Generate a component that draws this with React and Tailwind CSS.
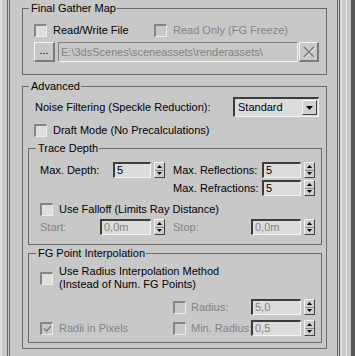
import React from 'react';

// 3ds Max style rollout: Final Gather Map + Advanced settings

function GroupBox({ title, inner, className = '', children }) {
  return (
    <fieldset className={`border border-[#6a6a6a] ${className}`}>
      <legend className={`${inner ? 'ml-[7px]' : 'ml-[6px]'} pl-[2px] pr-[1px] leading-[17px]`}>{title}</legend>
      {children}
    </fieldset>
  );
}

function Check({ checked, disabled }) {
  return (
    <div
      className={`w-[13px] h-[13px] shrink-0 flex items-center justify-center border-t-2 border-l-2 border-t-[#858585] border-l-[#858585] border-b border-r border-b-[#ececec] border-r-[#ececec] ${
        disabled ? 'bg-[#c8c8c8]' : 'bg-[#dedede]'
      }`}
    >
      {checked && (
        <svg width="9" height="8" viewBox="0 0 9 8">
          <path d="M1 3.5L3.5 6L8 1" fill="none" stroke={disabled ? '#808080' : '#000'} strokeWidth="1.6" />
        </svg>
      )}
    </div>
  );
}

function Field({ w, value, disabled }) {
  return (
    <div
      className={`${w} h-[16px] shrink-0 flex items-center pl-[2px] leading-none border-t-2 border-l-2 border-t-[#3c3c3c] border-l-[#3c3c3c] border-b border-r border-b-[#f4f4f4] border-r-[#f4f4f4] bg-[#dcdcdc] ${
        disabled ? 'text-[#838383]' : 'text-black'
      }`}
    >
      {value}
    </div>
  );
}

function Spinner() {
  return (
    <div className="w-[11px] h-[16px] ml-[3px] shrink-0 flex flex-col border-t border-l border-t-[#f4f4f4] border-l-[#f4f4f4] border-b border-r border-b-[#404040] border-r-[#404040] bg-[#cfcfcf]">
      <div className="flex-1 flex items-center justify-center border-b border-b-[#8a8a8a]">
        <svg width="5" height="3" viewBox="0 0 5 3"><path d="M2.5 0L5 3H0z" fill="#000" /></svg>
      </div>
      <div className="flex-1 flex items-center justify-center">
        <svg width="5" height="3" viewBox="0 0 5 3"><path d="M0 0h5L2.5 3z" fill="#000" /></svg>
      </div>
    </div>
  );
}

function Label({ w, disabled, children }) {
  return (
    <span className={`${w} shrink-0 whitespace-nowrap ${disabled ? 'text-[#838383]' : 'text-black'}`}>{children}</span>
  );
}

export default function App() {
  return (
    <div className="w-[355px] h-[356px] overflow-hidden flex bg-[#c8c8c8] text-[11px] text-black font-['Liberation_Sans',Arial,sans-serif]">
      {/* left edge */}
      <div className="w-[2px] shrink-0 bg-[#e2ded8]" />
      <div className="w-[5px] shrink-0" />

      {/* rollout */}
      <div className="w-[333px] shrink-0 flex flex-col border-x-[3px] border-double border-x-[#686868] pl-[12px] pr-[10px]">
        <GroupBox title="Final Gather Map">
          <div className="flex flex-col pt-[7px] pb-[12px] pl-[11px] pr-[6px]">
            <div className="h-[13px] flex items-center">
              <div className="w-[120px] flex items-center gap-[6px]">
                <Check />
                <Label>Read/Write File</Label>
              </div>
              <div className="flex items-center gap-[6px]">
                <Check disabled />
                <Label disabled>Read Only (FG Freeze)</Label>
              </div>
            </div>
            <div className="mt-[5px] h-[20px] flex items-center">
              <div className="w-[21px] h-[20px] flex items-end justify-center pb-[4px] border-t border-l border-t-[#f4f4f4] border-l-[#f4f4f4] border-b-2 border-r-2 border-b-[#7a7a7a] border-r-[#7a7a7a] leading-none">
                ...
              </div>
              <div className="ml-[3px] w-[240px] h-[20px] flex items-center pl-[2px] border-t border-l border-t-[#808080] border-l-[#808080] border-b border-r border-b-[#f4f4f4] border-r-[#f4f4f4] text-[#838383] whitespace-nowrap overflow-hidden">
                E:\3dsScenes\sceneassets\renderassets\
              </div>
              <div className="ml-[1px] w-[20px] h-[20px] flex items-center justify-center border-t border-l border-t-[#f4f4f4] border-l-[#f4f4f4] border-b-2 border-r-2 border-b-[#7a7a7a] border-r-[#7a7a7a]">
                <svg width="12" height="12" viewBox="0 0 12 12">
                  <path d="M1 1L11 11M11 1L1 11" stroke="#f4f4f4" strokeWidth="1.6" transform="translate(0.8 0.8)" />
                  <path d="M1 1L11 11M11 1L1 11" stroke="#7c7c7c" strokeWidth="1.6" />
                </svg>
              </div>
            </div>
          </div>
        </GroupBox>

        <GroupBox title="Advanced" className="mt-[3px]">
          <div className="flex flex-col pt-[2px] pb-[5px] pl-[5px] pr-[4px]">
            <div className="h-[20px] flex items-center justify-between pl-[7px] pr-[3px]">
              <Label>Noise Filtering (Speckle Reduction):</Label>
              <div className="w-[86px] h-[20px] flex items-center justify-between pl-[3px] pr-[1px] border-t-2 border-l-2 border-t-[#3c3c3c] border-l-[#3c3c3c] border-b border-r border-b-[#f4f4f4] border-r-[#f4f4f4] bg-[#dcdcdc]">
                <span>Standard</span>
                <div className="w-[15px] h-[15px] flex items-center justify-center border-t border-l border-t-[#f4f4f4] border-l-[#f4f4f4] border-b border-r border-b-[#404040] border-r-[#404040] bg-[#d2d2d2]">
                  <svg width="7" height="4" viewBox="0 0 7 4"><path d="M0 0h7L3.5 4z" fill="#000" /></svg>
                </div>
              </div>
            </div>

            <div className="mt-[7px] h-[13px] flex items-center gap-[6px] pl-[6px]">
              <Check />
              <Label>Draft Mode (No Precalculations)</Label>
            </div>

            <GroupBox title="Trace Depth" inner className="mt-[3px]">
              <div className="flex flex-col pt-[5px] pb-[9px] pl-[11px] pr-[6px]">
                <div className="h-[16px] flex items-center">
                  <div className="w-[133px] flex items-center">
                    <Label w="w-[73px]">Max. Depth:</Label>
                    <Field w="w-[38px]" value="5" />
                    <Spinner />
                  </div>
                  <div className="flex items-center">
                    <Label w="w-[89px]">Max. Reflections:</Label>
                    <Field w="w-[39px]" value="5" />
                    <Spinner />
                  </div>
                </div>
                <div className="mt-[2px] h-[16px] flex items-center">
                  <div className="w-[133px]" />
                  <div className="flex items-center">
                    <Label w="w-[89px]">Max. Refractions:</Label>
                    <Field w="w-[39px]" value="5" />
                    <Spinner />
                  </div>
                </div>
                <div className="mt-[7px] h-[13px] flex items-center gap-[6px]">
                  <Check />
                  <Label>Use Falloff (Limits Ray Distance)</Label>
                </div>
                <div className="mt-[3px] h-[16px] flex items-center">
                  <div className="w-[133px] flex items-center">
                    <Label w="w-[60px]" disabled>Start:</Label>
                    <Field w="w-[51px]" value="0,0m" disabled />
                    <Spinner />
                  </div>
                  <div className="flex items-center">
                    <Label w="w-[78px]" disabled>Stop:</Label>
                    <Field w="w-[50px]" value="0,0m" disabled />
                    <Spinner />
                  </div>
                </div>
              </div>
            </GroupBox>

            <GroupBox title="FG Point Interpolation" inner>
              <div className="flex flex-col pt-[3px] pb-[6px] pl-[11px] pr-[6px]">
                <div className="flex items-center gap-[6px]">
                  <Check />
                  <div className="flex flex-col leading-[13px]">
                    <span>Use Radius Interpolation Method</span>
                    <span>(Instead of Num. FG Points)</span>
                  </div>
                </div>
                <div className="mt-[8px] h-[16px] flex items-center">
                  <div className="w-[133px]" />
                  <div className="flex items-center">
                    <Check disabled />
                    <span className="w-[5px]" />
                    <Label w="w-[60px]" disabled>Radius:</Label>
                    <Field w="w-[50px]" value="5,0" disabled />
                    <Spinner />
                  </div>
                </div>
                <div className="mt-[5px] h-[16px] flex items-center">
                  <div className="w-[133px] flex items-center gap-[6px]">
                    <Check checked disabled />
                    <Label disabled>Radii in Pixels</Label>
                  </div>
                  <div className="flex items-center">
                    <Check disabled />
                    <span className="w-[5px]" />
                    <Label w="w-[60px]" disabled>Min. Radius:</Label>
                    <Field w="w-[50px]" value="0,5" disabled />
                    <Spinner />
                  </div>
                </div>
              </div>
            </GroupBox>
          </div>
        </GroupBox>
      </div>

      {/* right edge / scroll strip */}
      <div className="flex-1 flex">
        <div className="w-[1px]" />
        <div className="w-[1px] bg-[#ececec]" />
        <div className="w-[4px]" />
        <div className="w-[1px] bg-[#ececec]" />
        <div className="w-[4px]" />
        <div className="flex-1 bg-[#555555]" />
      </div>
    </div>
  );
}
